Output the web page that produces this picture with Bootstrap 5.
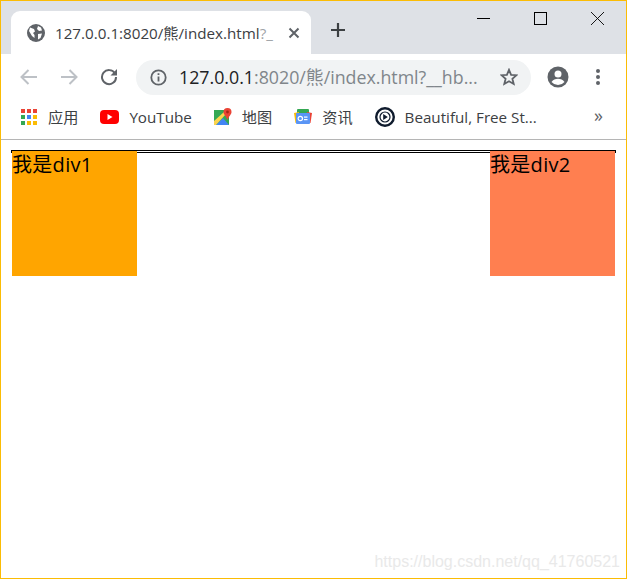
<!DOCTYPE html>
<html lang="zh">
<head>
<meta charset="utf-8">
<title>Browser</title>
<link href="https://cdn.jsdelivr.net/npm/bootstrap@5.3.0/dist/css/bootstrap.min.css" rel="stylesheet">
<style>
html,body{width:627px;height:579px;overflow:hidden;margin:0;background:#fff}
body{font-family:"Open Sans","Noto Sans CJK SC",sans-serif;color:#000}
.frame{width:627px;height:579px;border:1px solid #fbbc05;position:relative;overflow:hidden}
.tabstrip{height:53px;background:#dee1e6;padding:10px 0 0 10px}
.tabshape{width:300px;height:43px;background:#fff;border-radius:9px 9px 0 0;padding:1px 11px 0 16px;color:#3c4043;font-size:15.2px}
.tabtext{margin-left:10px;white-space:nowrap}
.tabtext i{font-style:normal;color:#a0a4a8}
.plusbtn{margin:10px 0 0 18px;width:18px;height:18px}
.winctl{margin-left:auto;height:34px;margin-top:-10px;padding-right:22px;gap:44px}
.toolbar{height:45px;padding:1px 0 0 19px}
.navgap{gap:22px}
.omni{width:395px;height:35px;margin-left:18px;background:#f1f3f4;border-radius:18px;padding:0 13px 0 14px;font-size:17.8px;color:#202124}
.omni i{font-style:normal;color:#80868b}
.omnitext{margin-left:12px;white-space:nowrap}
.rightico{margin-left:16px;gap:27px}
.bookbar{height:41px;padding:0 0 3px 20px;font-size:15.2px;color:#3c4043;border-bottom:1px solid #b5b5b5;gap:22px}
.bmk{white-space:nowrap}
.bmk svg{margin-right:10px;flex:none}
.bmore{margin-left:auto;padding:0 23px 5px 0;font-size:18px;color:#5f6368;line-height:1}
.pagearea{padding:10px 10px 0 10px}
.outerbox{border:1px solid #000;height:3px;width:605px}
.boxa,.boxb{width:125px;height:125px;font-size:20px;line-height:28px;letter-spacing:.3px;color:#000}
.boxa{background:#ffa500}
.boxb{background:#ff7f50}
.wmark{position:absolute;right:6px;bottom:8px;font-family:"Liberation Sans",sans-serif;font-size:16px;color:#e9e9e9;line-height:1}
</style>
</head>
<body>
<div class="frame">
  <div>
    <div class="tabstrip d-flex">
      <div class="tabshape d-flex align-items-center">
        <svg width="18" height="18" viewBox="0 0 18 18"><circle cx="9" cy="9" r="9" fill="#5f6368"/><path d="M3 3.500 7 5l1 2.500-2 1.500 1.500 2v3L5 12 2 7zM11 2l3 1.500 1 3-3 .5-2-2zM11 10l4-.5-1.500 4.500L11 15.500z" fill="#fff"/></svg>
        <span class="tabtext">127.0.0.1:8020/熊/index.html<i>?_</i></span>
        <svg class="ms-auto" width="12" height="12" viewBox="0 0 12 12"><path d="M1.500 1.500l9 9m0-9l-9 9" stroke="#5f6368" stroke-width="2"/></svg>
      </div>
      <svg class="plusbtn" viewBox="0 0 18 18"><path d="M9 2v14M2 9h14" stroke="#3c4043" stroke-width="2.200"/></svg>
      <div class="winctl d-flex align-items-center">
        <svg width="13" height="13" viewBox="0 0 13 13"><path d="M0 6.500h13" stroke="#000"/></svg>
        <svg width="13" height="13" viewBox="0 0 13 13"><rect x=".5" y=".5" width="12" height="12" fill="none" stroke="#000"/></svg>
        <svg width="13" height="13" viewBox="0 0 13 13"><path d="M0 0l13 13m0-13L0 13" stroke="#000" stroke-width=".9"/></svg>
      </div>
    </div>
    <div class="toolbar d-flex align-items-center">
      <div class="d-flex navgap">
        <svg width="18" height="18" viewBox="0 0 18 18"><path d="M17 9H2m6.500-7L1.500 9l7 7" fill="none" stroke="#bdc1c6" stroke-width="2"/></svg>
        <svg width="18" height="18" viewBox="0 0 18 18"><path d="M1 9h15M9.500 2l7 7-7 7" fill="none" stroke="#bdc1c6" stroke-width="2"/></svg>
        <svg width="18" height="18" viewBox="0 0 18 18"><path d="M15 5.500A7 7 0 1 0 16 9" fill="none" stroke="#5f6368" stroke-width="2"/><path d="M17 1v6.500h-6.500z" fill="#5f6368"/></svg>
      </div>
      <div class="omni d-flex align-items-center">
        <svg width="17" height="17" viewBox="0 0 17 17"><circle cx="8.500" cy="8.500" r="7.200" fill="none" stroke="#5f6368" stroke-width="1.800"/><path d="M8.500 7.500v5M8.500 4.300v1.800" stroke="#5f6368" stroke-width="1.800"/></svg>
        <span class="omnitext">127.0.0.1<i>:8020/熊/index.html?__hb...</i></span>
        <svg class="ms-auto" width="18" height="18" viewBox="0 0 18 18"><path d="M9 1.800l2.100 5 5.400.4-4.100 3.500 1.300 5.300L9 13.200 4.300 16l1.300-5.300L1.500 7.200l5.400-.4z" fill="none" stroke="#5f6368" stroke-width="1.800"/></svg>
      </div>
      <div class="rightico d-flex align-items-center">
        <svg width="22" height="22" viewBox="0 0 22 22"><circle cx="11" cy="11" r="10.500" fill="#5f6368"/><circle cx="11" cy="8" r="3.500" fill="#fff"/><path d="M4.500 16c1.500-2.500 4-3.300 6.500-3.300s5 .8 6.500 3.300a8.500 8.500 0 0 1-13 0z" fill="#fff"/></svg>
        <svg width="4" height="16" viewBox="0 0 4 16"><circle cx="2" cy="2" r="2" fill="#5f6368"/><circle cx="2" cy="8" r="2" fill="#5f6368"/><circle cx="2" cy="14" r="2" fill="#5f6368"/></svg>
      </div>
    </div>
    <div class="bookbar d-flex align-items-center">
      <span class="bmk d-flex align-items-center">
        <svg width="17" height="17" viewBox="0 0 17 17"><g fill="#ea4335"><rect width="4" height="4"/><rect x="6" width="4" height="4"/><rect x="12" width="4" height="4"/></g><rect y="6" width="4" height="4" fill="#34a853"/><rect x="6" y="6" width="4" height="4" fill="#4285f4"/><rect x="12" y="6" width="4" height="4" fill="#fbbc05"/><rect y="12" width="4" height="4" fill="#34a853"/><rect x="6" y="12" width="4" height="4" fill="#fbbc05"/><rect x="12" y="12" width="4" height="4" fill="#fbbc05"/></svg>应用</span>
      <span class="bmk d-flex align-items-center">
        <svg width="19" height="14" viewBox="0 0 19 14"><rect width="19" height="14" rx="4" fill="#f00"/><path d="M7.500 4l5 3-5 3z" fill="#fff"/></svg>YouTube</span>
      <span class="bmk d-flex align-items-center">
        <svg width="18" height="18" viewBox="0 0 18 18"><rect y="2" width="15" height="15" fill="#34a853"/><path d="M2 17 9 10l6 7z" fill="#4285f4"/><path d="M0 13 10 4l2 2L2 17H0z" fill="#fbd34d"/><path d="M13.500 0a4 4 0 0 1 4 4c0 2.500-2.500 4-4 8-1.500-4-4-5.500-4-8a4 4 0 0 1 4-4z" fill="#ea4335"/><circle cx="13.500" cy="4" r="1.400" fill="#a52714"/></svg>地图</span>
      <span class="bmk d-flex align-items-center">
        <svg width="18" height="18" viewBox="0 0 18 18"><rect x="3" y="1" width="12" height="6" rx="1" fill="#34a853"/><path d="M13 4l5 1-1.500 10H13z" fill="#ea4335"/><path d="M0 5l5-1v11H1.500z" fill="#fbbc05"/><rect x="2" y="5" width="14" height="11" rx="1" fill="#5a95f5"/><circle cx="6.300" cy="10.500" r="2.200" fill="none" stroke="#fff" stroke-width="1.200"/><rect x="10" y="8.500" width="3.500" height="1.200" fill="#fff"/><rect x="10" y="11" width="3.500" height="1.200" fill="#fff"/></svg>资讯</span>
      <span class="bmk d-flex align-items-center">
        <svg width="20" height="20" viewBox="0 0 20 20"><circle cx="10" cy="10" r="8.800" fill="#fff" stroke="#0f1b2d" stroke-width="2.400"/><circle cx="10" cy="10" r="5" fill="#fff" stroke="#0f1b2d" stroke-width="1.200"/><path d="M8.200 7l4.600 3-4.600 3z" fill="#0f1b2d"/></svg>Beautiful, Free St...</span>
      <span class="bmore">»</span>
    </div>
  </div>
  <div class="pagearea">
    <div class="outerbox">
      <div class="boxa float-start">我是div1</div>
      <div class="boxb float-end">我是div2</div>
    </div>
  </div>
  <div class="wmark">https://blog.csdn.net/qq_41760521</div>
</div>
<script src="https://cdn.jsdelivr.net/npm/bootstrap@5.3.0/dist/js/bootstrap.bundle.min.js"></script>
</body>
</html>
